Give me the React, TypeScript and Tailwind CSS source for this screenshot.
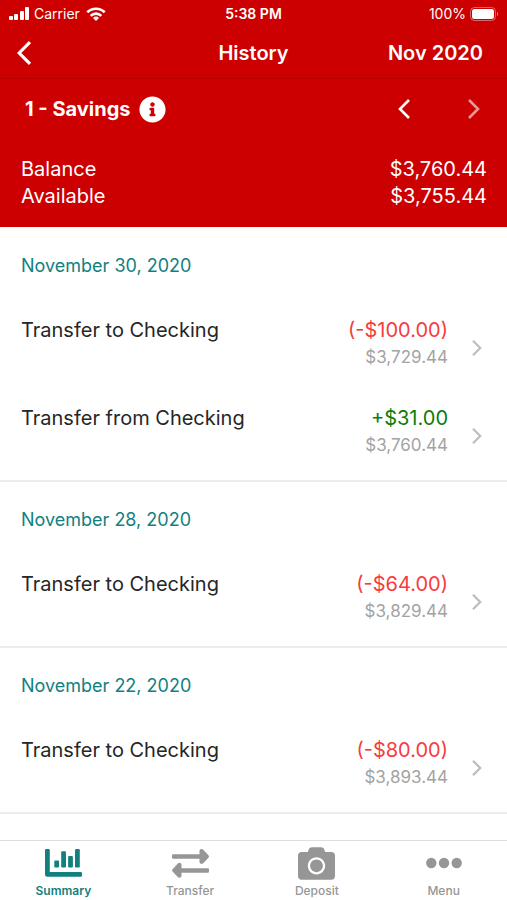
import type { ReactNode } from "react";
import { FaCamera, FaInfoCircle } from "react-icons/fa";

type Transaction = { title: string; amount: string; balance: string; credit?: boolean };
type Day = { date: string; items: Transaction[] };

const days: Day[] = [
  {
    date: "November 30, 2020",
    items: [
      { title: "Transfer to Checking", amount: "(-$100.00)", balance: "$3,729.44" },
      { title: "Transfer from Checking", amount: "+$31.00", balance: "$3,760.44", credit: true },
    ],
  },
  {
    date: "November 28, 2020",
    items: [{ title: "Transfer to Checking", amount: "(-$64.00)", balance: "$3,829.44" }],
  },
  {
    date: "November 22, 2020",
    items: [{ title: "Transfer to Checking", amount: "(-$80.00)", balance: "$3,893.44" }],
  },
];

function Chevron({ left, className }: { left?: boolean; className: string }) {
  return (
    <svg viewBox="0 0 12 20" className={className} fill="none" stroke="currentColor" aria-hidden="true">
      <path d={left ? "M11 1 2 10l9 9" : "M1 1l9 9-9 9"} />
    </svg>
  );
}

function StatusBar() {
  return (
    <div className="grid h-7 grid-cols-3 items-center px-2 text-sm">
      <div className="flex items-center gap-1">
        <svg viewBox="0 0 22 14" className="h-3.5 w-[22px]" fill="currentColor" aria-hidden="true">
          <rect x="1" y="9" width="4" height="4" rx="1" />
          <rect x="6" y="7" width="4" height="6" rx="1" />
          <rect x="12" y="4" width="4" height="9" rx="1" />
          <rect x="17" y="0" width="4" height="13" rx="1" />
        </svg>
        <span>Carrier</span>
        <svg viewBox="0 0 20 14" className="ml-0.5 h-3.5 w-5" fill="none" stroke="currentColor" strokeWidth="2.6" aria-hidden="true">
          <path d="M1.3 5.3a12.4 12.4 0 0 1 17.4 0" />
          <path d="M4.7 8.8a7.5 7.5 0 0 1 10.6 0" />
          <path d="M10 14l-3-3a4.3 4.3 0 0 1 6 0z" fill="currentColor" stroke="none" />
        </svg>
      </div>
      <div className="text-center font-semibold">5:38 PM</div>
      <div className="flex items-center justify-end gap-1">
        <span>100%</span>
        <svg viewBox="0 0 29 14" className="h-3.5 w-[29px]" aria-hidden="true">
          <rect x="0.5" y="0.5" width="25" height="13" rx="4" fill="none" stroke="#fff" strokeOpacity="0.4" />
          <rect x="2" y="2" width="22" height="10" rx="2.5" fill="#fff" />
          <path d="M27 5v4a2.3 2.3 0 0 0 0-4z" fill="#fff" fillOpacity="0.5" />
        </svg>
      </div>
    </div>
  );
}

function Header() {
  return (
    <header className="shrink-0 bg-[#cc0000] text-white">
      <StatusBar />
      <div className="grid h-[51px] grid-cols-3 items-center border-b border-[#b80000] px-4 text-xl font-semibold">
        <button type="button" aria-label="Back" className="w-4">
          <Chevron left className="h-6 w-4 stroke-[2.6]" />
        </button>
        <h1 className="text-center">History</h1>
        <button type="button" className="pr-2 text-right">Nov 2020</button>
      </div>
      <div className="flex h-[60px] items-center px-[25px]">
        <h2 className="text-xl font-bold">1 - Savings</h2>
        <button type="button" aria-label="Account information" className="ml-2">
          <FaInfoCircle className="size-[27px]" />
        </button>
        <div className="ml-auto flex gap-[54px]">
          <button type="button" aria-label="Previous month">
            <Chevron left className="h-5 w-4 stroke-[2.6]" />
          </button>
          <button type="button" aria-label="Next month" className="opacity-60" disabled>
            <Chevron className="h-5 w-4 stroke-[2.6]" />
          </button>
        </div>
      </div>
      <dl className="pb-[17px] pl-[21px] pr-5 pt-[17px] text-xl leading-[27px]">
        <div className="flex justify-between">
          <dt>Balance</dt>
          <dd>$3,760.44</dd>
        </div>
        <div className="flex justify-between">
          <dt>Available</dt>
          <dd>$3,755.44</dd>
        </div>
      </dl>
    </header>
  );
}

function Row({ item }: { item: Transaction }) {
  return (
    <li>
      <button type="button" className="flex h-[88px] w-full items-center pl-[21px] pr-[25px] text-left">
        <span className="flex h-full flex-1 pt-3 text-xl text-[#262626]">{item.title}</span>
        <span className="flex h-full flex-col pt-3 text-right">
          <span className={item.credit ? "text-xl text-[#0a7d0a]" : "text-xl text-[#f83b3b]"}>{item.amount}</span>
          <span className="text-[17px] leading-[26px] text-[#a3a3a3]">{item.balance}</span>
        </span>
        <Chevron className="ml-6 h-4 w-2.5 stroke-[2.8] text-[#bdbdbd]" />
      </button>
    </li>
  );
}

function Tab({ label, active, children }: { label: string; active?: boolean; children: ReactNode }) {
  return (
    <a
      href="#"
      aria-current={active ? "page" : undefined}
      className={
        active
          ? "flex flex-1 flex-col items-center gap-0.5 pt-1 text-xs font-semibold text-[#12807f]"
          : "flex flex-1 flex-col items-center gap-0.5 pt-1 text-xs font-medium text-[#969696]"
      }
    >
      <span className="flex h-9 items-center">{children}</span>
      <span>{label}</span>
    </a>
  );
}

export default function App() {
  return (
    <div className="flex h-dvh flex-col bg-white font-['Inter',sans-serif]">
      <Header />
      <main className="min-h-0 flex-1 overflow-hidden pt-px">
        {days.map((day) => (
          <section key={day.date} className="border-b-2 border-[#ececec]">
            <h3 className="flex h-[76px] items-center px-[21px] text-lg text-[#12807f]">{day.date}</h3>
            <ul>
              {day.items.map((item) => (
                <Row key={item.title} item={item} />
              ))}
            </ul>
          </section>
        ))}
      </main>
      <nav className="flex h-[60px] shrink-0 border-t border-[#dedede] bg-white">
        <Tab label="Summary" active>
          <svg viewBox="0 0 37 28" className="h-7 w-[37px]" fill="currentColor" aria-hidden="true">
            <path d="M1.200 0h2.400a1.200 1.200 0 0 1 1.200 1.200V23h31a1.200 1.200 0 0 1 1.200 1.200v2.400a1.200 1.200 0 0 1-1.200 1.200H2.300A2.300 2.300 0 0 1 0 25.500V1.200A1.200 1.200 0 0 1 1.200 0z" />
            <rect x="9.300" y="11.500" width="4.800" height="7" rx="1.200" />
            <rect x="16.200" y="2.300" width="4.800" height="16.200" rx="1.200" />
            <rect x="23.100" y="7" width="4.800" height="11.500" rx="1.200" />
            <rect x="30" y="0" width="4.800" height="18.500" rx="1.200" />
          </svg>
        </Tab>
        <Tab label="Transfer">
          <svg viewBox="0 0 37 29" className="h-[29px] w-[37px]" fill="currentColor" aria-hidden="true">
            <path d="M1.200 5.200H27.500V2c0-2 2.400-2.700 3.700-1.300l5 5.300a2 2 0 0 1 0 2.900l-5 5.300c-1.300 1.300-3.700.500-3.700-1.300V9.700H1.200A1.200 1.200 0 0 1 0 8.500V6.400a1.200 1.200 0 0 1 1.200-1.200z" />
            <path d="M35.800 19.300H9.500v-3.400c0-2-2.400-2.700-3.700-1.300l-5 5.300a2 2 0 0 0 0 2.900l5 5.300c1.300 1.300 3.700.500 3.700-1.300v-3h26.300a1.200 1.200 0 0 0 1.200-1.200v-2.100a1.200 1.200 0 0 0-1.200-1.200z" />
          </svg>
        </Tab>
        <Tab label="Deposit">
          <FaCamera className="size-[37px]" />
        </Tab>
        <Tab label="Menu">
          <svg viewBox="0 0 36 12" className="h-3 w-9" fill="currentColor" aria-hidden="true">
            <circle cx="5.300" cy="6" r="5.200" />
            <circle cx="18" cy="6" r="5.200" />
            <circle cx="30.700" cy="6" r="5.200" />
          </svg>
        </Tab>
      </nav>
    </div>
  );
}
